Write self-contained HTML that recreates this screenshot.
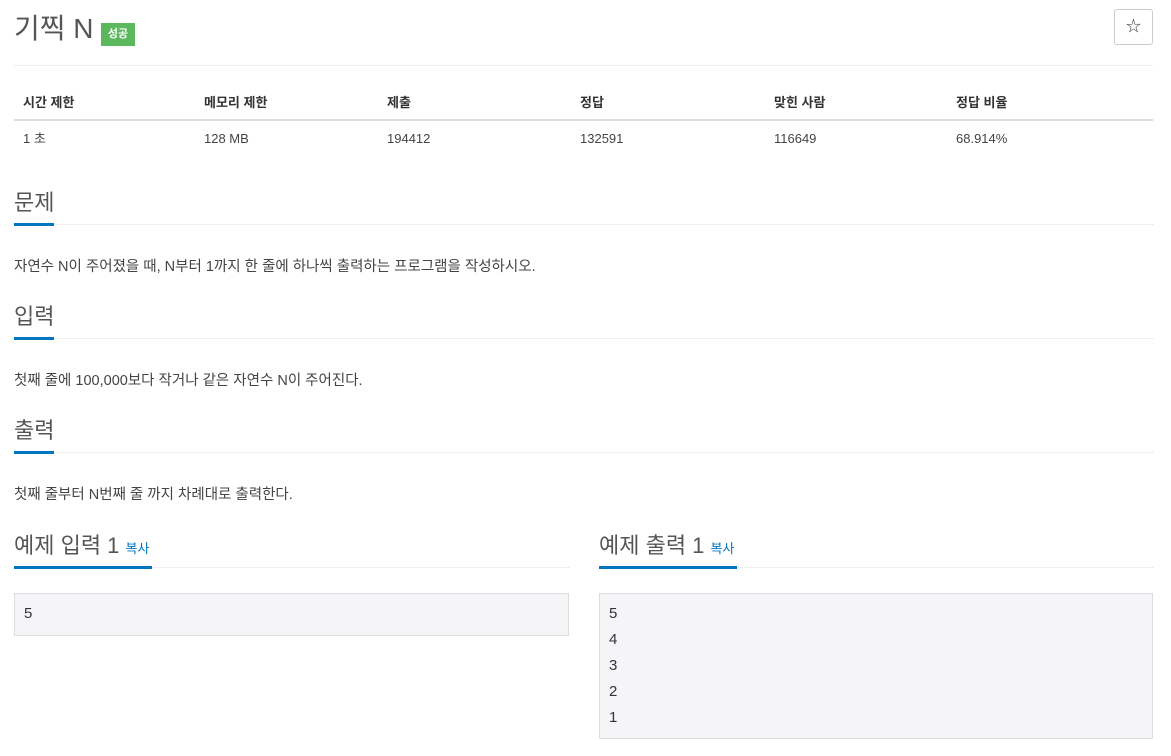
<!DOCTYPE html>
<html><head><meta charset="utf-8"><style>
body{margin:0;width:1171px;height:756px;background:#fff;font-family:"Liberation Sans","Noto Sans CJK KR",sans-serif;color:#333;position:relative;overflow:hidden}
.a{position:absolute;white-space:nowrap}
.h{font-size:22px;color:#555;line-height:1}
.ul{position:absolute;height:0;border-top:1px dotted #e0e0e0}
.bl{position:absolute;height:3px;background:#0076c0}
.t{font-size:14.5px;color:#444;line-height:18px}
.th{font-size:13px;font-weight:bold;top:95px;line-height:16px}
.td{font-size:13px;top:131px;color:#444;line-height:16px}
.pre{position:absolute;background:#f5f5f7;border:1px solid #ddd;box-sizing:border-box;font-size:15px;line-height:26px;padding:7px 9px;color:#333}
.cp{font-size:13px;color:#0076c0}
</style></head><body>
<div class="a" style="left:14px;top:11px;font-size:28px;color:#555;line-height:36px">기찍 N</div>
<div class="a" style="left:101px;top:23px;width:34px;height:23px;background:#5cb85c;color:#fff;font-size:11px;font-weight:bold;text-align:center;line-height:23px">성공</div>
<div class="a" style="left:1114px;top:9px;width:39px;height:36px;border:1px solid #ccc;box-sizing:border-box;border-radius:3px;text-align:center;line-height:34px;font-size:15px;color:#333">☆</div>
<div class="a" style="left:14px;top:65px;width:1139px;height:1px;background:#eee"></div>
<div class="a th" style="left:23px">시간 제한</div>
<div class="a th" style="left:204px">메모리 제한</div>
<div class="a th" style="left:387px">제출</div>
<div class="a th" style="left:580px">정답</div>
<div class="a th" style="left:774px">맞힌 사람</div>
<div class="a th" style="left:956px">정답 비율</div>
<div class="a" style="left:14px;top:119px;width:1139px;height:2px;background:#ddd"></div>
<div class="a td" style="left:23px">1 초</div>
<div class="a td" style="left:204px">128 MB</div>
<div class="a td" style="left:387px">194412</div>
<div class="a td" style="left:580px">132591</div>
<div class="a td" style="left:774px">116649</div>
<div class="a td" style="left:956px">68.914%</div>

<div class="a h" style="left:14px;top:192px">문제</div>
<div class="ul" style="left:14px;top:224px;width:1139px"></div>
<div class="bl" style="left:14px;top:223px;width:40px"></div>
<div class="a t" style="left:14px;top:258px">자연수 N이 주어졌을 때, N부터 1까지 한 줄에 하나씩 출력하는 프로그램을 작성하시오.</div>

<div class="a h" style="left:14px;top:306px">입력</div>
<div class="ul" style="left:14px;top:338px;width:1139px"></div>
<div class="bl" style="left:14px;top:337px;width:40px"></div>
<div class="a t" style="left:14px;top:372px">첫째 줄에 100,000보다 작거나 같은 자연수 N이 주어진다.</div>

<div class="a h" style="left:14px;top:420px">출력</div>
<div class="ul" style="left:14px;top:452px;width:1139px"></div>
<div class="bl" style="left:14px;top:451px;width:40px"></div>
<div class="a t" style="left:14px;top:486px">첫째 줄부터 N번째 줄 까지 차례대로 출력한다.</div>

<div class="a h" style="left:14px;top:535px">예제 입력 1 <span class="cp">복사</span></div>
<div class="ul" style="left:14px;top:567px;width:555px"></div>
<div class="bl" style="left:14px;top:566px;width:138px"></div>
<div class="pre" style="left:14px;top:593px;width:555px;height:43px">5</div>

<div class="a h" style="left:599px;top:535px">예제 출력 1 <span class="cp">복사</span></div>
<div class="ul" style="left:599px;top:567px;width:554px"></div>
<div class="bl" style="left:599px;top:566px;width:138px"></div>
<div class="pre" style="left:599px;top:593px;width:554px;height:146px">5<br>4<br>3<br>2<br>1</div>
</body></html>
